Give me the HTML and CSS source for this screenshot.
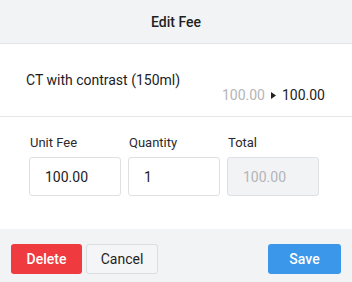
FILE: index.html
```html
<!DOCTYPE html>
<html>
<head>
<meta charset="utf-8">
<link rel="stylesheet" href="styles.css">
</head>
<body>
<div class="modal">
  <div class="header">Edit Fee</div>
  <div class="item">
    <div class="item-name">CT with contrast (150ml)</div>
    <div class="item-change">
      <span class="old">100.00</span>
      <svg class="arrow" width="5" height="7" viewBox="0 0 5 7"><path d="M0 0 L5 3.5 L0 7 Z" fill="#222"/></svg>
      <span class="new">100.00</span>
    </div>
  </div>
  <div class="fields">
    <div class="field">
      <label class="label">Unit Fee</label>
      <div class="input">100.00</div>
    </div>
    <div class="field">
      <label class="label">Quantity</label>
      <div class="input">1</div>
    </div>
    <div class="field">
      <label class="label">Total</label>
      <div class="input disabled">100.00</div>
    </div>
  </div>
  <div class="footer">
    <div class="left">
      <button class="btn delete">Delete</button>
      <button class="btn cancel">Cancel</button>
    </div>
    <button class="btn save">Save</button>
  </div>
</div>
</body>
</html>
```
FILE: styles.css
```css
* { box-sizing: border-box; }
html, body { margin: 0; padding: 0; }
body {
  width: 352px;
  height: 282px;
  background: #ffffff;
  font-family: Roboto, "Noto Sans", sans-serif;
  color: #1c1c1e;
  overflow: hidden;
}
.modal { display: flex; flex-direction: column; height: 282px; }
.header {
  height: 44px;
  background: #f2f3f5;
  border-bottom: 1px solid #e3e4e7;
  display: flex;
  align-items: center;
  justify-content: center;
  font-size: 14px;
  font-weight: 500;
  color: #1f1f22;
}
.item {
  height: 73px;
  border-bottom: 1px solid #e6e7ea;
  padding: 26px 27px 0 26px;
}
.item-name { font-size: 14px; line-height: 20px; }
.item-change {
  display: flex;
  justify-content: flex-end;
  align-items: center;
  gap: 6px;
  font-size: 14px;
  line-height: 18px;
  margin-top: -4px;
}
.old { color: #b4b5b8; }
.new { color: #1c1c1e; }
.fields {
  display: flex;
  gap: 7px;
  padding: 17px 33px 0 29px;
  height: 112px;
}
.field { flex: 1; display: flex; flex-direction: column; }
.label { font-size: 13px; line-height: 18px; color: #2a2a2d; padding-left: 1px; margin-bottom: 5px; }
.input {
  height: 39px;
  border: 1px solid #dfe0e3;
  border-radius: 3px;
  padding-left: 15px;
  display: flex;
  align-items: center;
  font-size: 14px;
  color: #1c1c1e;
  background: #fff;
}
.input.disabled { background: #f2f3f5; color: #b4b5b8; }
.footer {
  flex: 1;
  background: #f2f3f5;
  display: flex;
  justify-content: space-between;
  align-items: flex-start;
  padding: 15px 11px 0 11px;
}
.left { display: flex; gap: 4px; }
.btn {
  height: 30px;
  border-radius: 3px;
  font-family: inherit;
  font-size: 14px;
  border: 1px solid transparent;
  padding: 0;
  cursor: pointer;
}
.delete { width: 71px; background: #ef3b3f; color: #fff; font-weight: 500; }
.cancel { width: 72px; background: #f4f5f7; border-color: #dcdde0; color: #1f1f22; }
.save { width: 73px; background: #3a97ea; color: #fff; font-weight: 500; }
```
